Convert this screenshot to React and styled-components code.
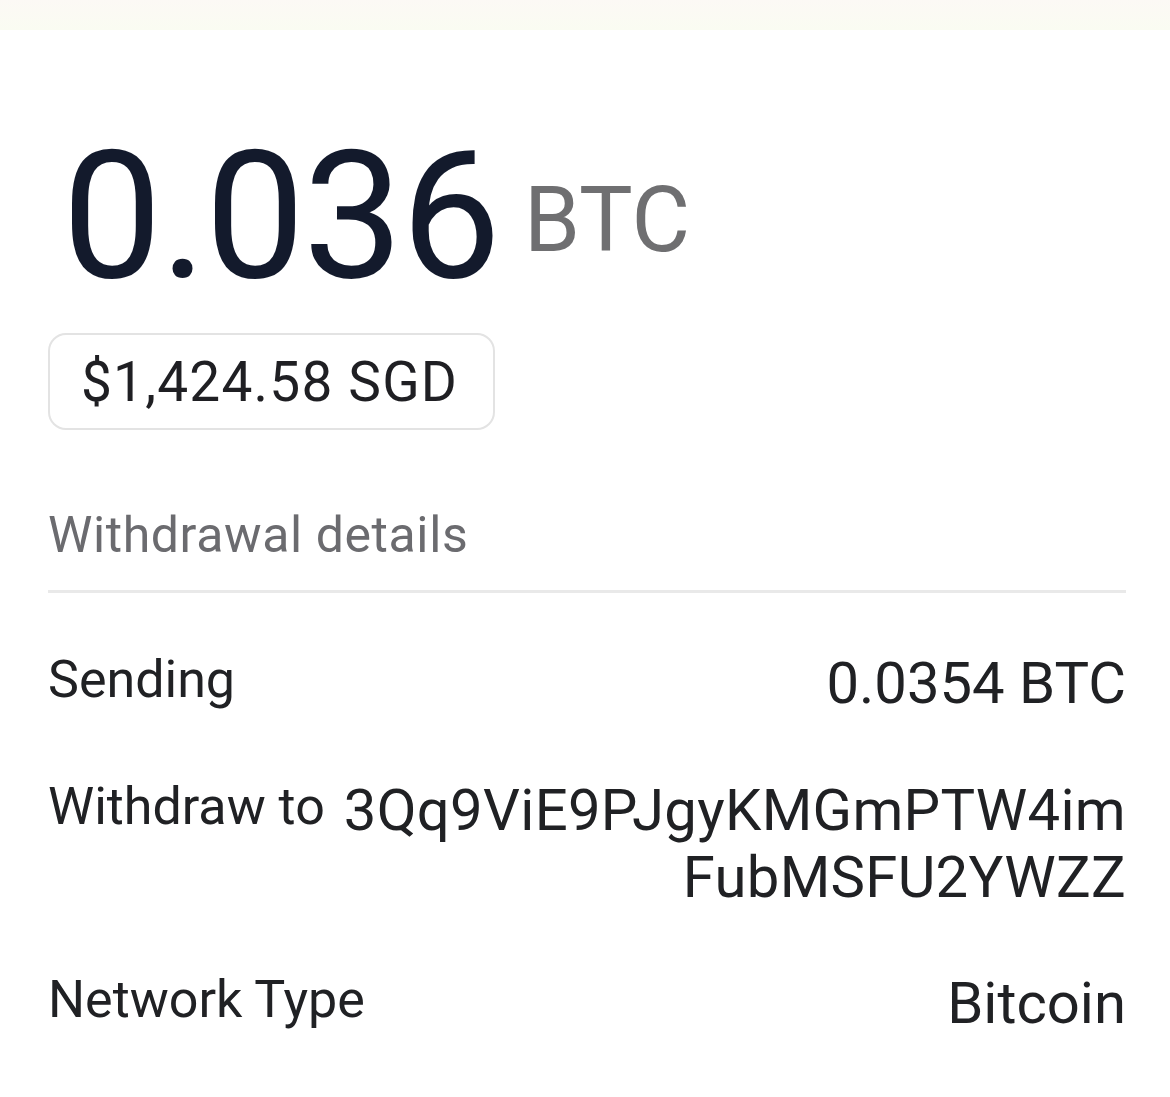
import React from "react";
import styled, { createGlobalStyle } from "styled-components";

const Global = createGlobalStyle`
  html, body {
    margin: 0;
    padding: 0;
    background: #ffffff;
    font-family: Roboto, "Liberation Sans", sans-serif;
  }
`;

const Page = styled.div`
  width: 1170px;
  min-height: 1097px;
  background: #ffffff;
  overflow: hidden;
`;

const TopBand = styled.div`
  height: 30px;
  background: linear-gradient(#fcf9f5, #fafcf2);
`;

const Content = styled.div`
  padding: 97px 44px 0 48px;
  display: flex;
  flex-direction: column;
`;

const AmountRow = styled.div`
  display: flex;
  align-items: flex-start;
  gap: 25px;
  padding-left: 14px;
`;

const Amount = styled.span`
  font-size: 178px;
  line-height: 1;
  font-weight: 400;
  color: #131a2c;
  letter-spacing: -2px;
`;

const Unit = styled.span`
  margin-top: 49px;
  font-size: 90px;
  line-height: 1;
  color: #6f6f71;
`;

const FiatPill = styled.div`
  align-self: flex-start;
  box-sizing: border-box;
  margin-top: 28px;
  height: 97px;
  padding: 0 35px 0 31px;
  display: flex;
  align-items: center;
  border: 2px solid #e3e3e3;
  border-radius: 18px;
  font-size: 55px;
  color: #1f1f23;
  letter-spacing: 1.2px;
`;

const SectionTitle = styled.div`
  margin-top: 80px;
  font-size: 50px;
  line-height: 1;
  color: #6b6b6f;
  letter-spacing: 0.6px;
`;

const Divider = styled.div`
  margin-top: 30px;
  height: 3px;
  background: #e9e9e9;
`;

const Row = styled.div`
  display: flex;
  justify-content: space-between;
  align-items: flex-start;
  gap: 16px;
  margin-top: ${(p) => p.$top}px;
`;

const Label = styled.div`
  font-size: 52px;
  line-height: 66px;
  color: #202124;
  white-space: nowrap;
`;

const Value = styled.div`
  padding-top: 3px;
  font-size: 58px;
  line-height: 66px;
  color: #202124;
  text-align: right;
`;

const Address = styled(Value)`
  line-height: 67px;
  letter-spacing: 0.3px;
`;

const AddressLine = styled.span`
  display: block;
  white-space: nowrap;
`;

export default function App() {
  return (
    <Page>
      <Global />
      <TopBand />
      <Content>
        <AmountRow>
          <Amount>0.036</Amount>
          <Unit>BTC</Unit>
        </AmountRow>
        <FiatPill>$1,424.58 SGD</FiatPill>
        <SectionTitle>Withdrawal details</SectionTitle>
        <Divider />
        <Row $top={54}>
          <Label>Sending</Label>
          <Value>0.0354 BTC</Value>
        </Row>
        <Row $top={58}>
          <Label>Withdraw to</Label>
          <Address>
            <AddressLine>3Qq9ViE9PJgyKMGmPTW4im</AddressLine>
            <AddressLine>FubMSFU2YWZZ</AddressLine>
          </Address>
        </Row>
        <Row $top={56}>
          <Label>Network Type</Label>
          <Value>Bitcoin</Value>
        </Row>
      </Content>
    </Page>
  );
}
